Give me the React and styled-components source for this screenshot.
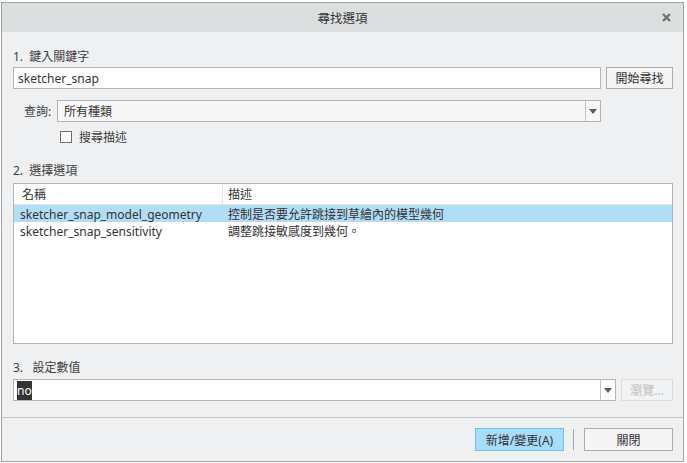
import React from "react";
import styled, { createGlobalStyle } from "styled-components";

const Global = createGlobalStyle`
  html, body { margin: 0; padding: 0; background: #ffffff; }
  body {
    font-family: "Noto Sans", "Noto Sans CJK TC", sans-serif;
    font-size: 12px;
    color: #404040;
  }
`;

const Dialog = styled.div`
  box-sizing: border-box;
  width: 683px;
  height: 460px;
  margin: 2px 0 0 1px;
  border: 1px solid #a3a3a3;
  background: #eff0f2;
  display: flex;
  flex-direction: column;
`;

const TitleBar = styled.div`
  height: 29px;
  background: #dcdfe0;
  display: flex;
  align-items: center;
  justify-content: center;
  position: relative;
  font-size: 12.5px;
  color: #333;
`;

const CloseBtn = styled.div`
  position: absolute;
  right: 12px;
  top: 10px;
  width: 9px;
  height: 9px;
  display: flex;
`;

const Body = styled.div`
  padding: 0 10px 0 11px;
  display: flex;
  flex-direction: column;
`;

const SectionLabel = styled.div`
  height: 16px;
  line-height: 16px;
  margin-top: ${(p) => p.$top}px;
  white-space: pre;
`;

const Row = styled.div`
  display: flex;
  align-items: center;
  gap: ${(p) => p.$gap || 0}px;
  margin-top: ${(p) => p.$top || 0}px;
  padding-left: ${(p) => p.$indent || 0}px;
  padding-right: ${(p) => p.$right || 0}px;
  height: ${(p) => p.$h || 22}px;
`;

const TextField = styled.div`
  box-sizing: border-box;
  flex: 1;
  height: 22px;
  background: #fff;
  border: 1px solid #b4b4b4;
  display: flex;
  align-items: center;
  padding-left: 4px;
  color: #333;
`;

const Button = styled.div`
  box-sizing: border-box;
  width: ${(p) => p.$w}px;
  height: ${(p) => p.$h || 22}px;
  display: flex;
  align-items: center;
  justify-content: center;
  background: ${(p) => (p.$primary ? "#a7dcfa" : p.$disabled ? "#f1f2f3" : "#f5f5f5")};
  border: 1px solid ${(p) => (p.$primary ? "#6ec2f0" : p.$disabled ? "#dcdcdc" : "#acacac")};
  color: ${(p) => (p.$disabled ? "#c0c0c0" : "#333")};
`;

const QueryLabel = styled.div`
  width: 33px;
`;

const Combo = styled.div`
  box-sizing: border-box;
  flex: 1;
  height: 22px;
  display: flex;
  background: ${(p) => (p.$white ? "#fff" : "#f7f7f7")};
  border: 1px solid #b4b4b4;
`;

const ComboText = styled.div`
  flex: 1;
  display: flex;
  align-items: center;
  padding-left: ${(p) => p.$pad}px;
  color: #333;
`;

const ComboArrow = styled.div`
  width: 14px;
  border-left: 1px solid #c4c4c4;
  display: flex;
  align-items: center;
  justify-content: center;
`;

const Arrow = () => (
  <svg width="8" height="5" viewBox="0 0 8 5">
    <path d="M0 0 H8 L4 5 Z" fill="#5a5a5a" />
  </svg>
);

const CheckBox = styled.div`
  box-sizing: border-box;
  width: 12px;
  height: 12px;
  border: 1px solid #6e6e6e;
  background: #fff;
`;

const List = styled.div`
  box-sizing: border-box;
  margin-top: 4px;
  height: 161px;
  background: #fff;
  border: 1px solid #b4b4b4;
`;

const ListRow = styled.div`
  display: grid;
  grid-template-columns: 208px 1fr;
  height: ${(p) => (p.$header ? 20 : 17)}px;
  align-items: center;
  background: ${(p) => (p.$selected ? "#b1ddf9" : "#fff")};
  border-bottom: ${(p) => (p.$header ? "1px solid #e3e3e3" : "none")};
  color: #333;
`;

const Cell = styled.div`
  height: 100%;
  display: flex;
  align-items: center;
  padding-left: ${(p) => p.$pad}px;
  border-left: ${(p) => (p.$divider ? "1px solid #e3e3e3" : "none")};
  white-space: nowrap;
`;

const Selected = styled.span`
  background: #333;
  color: #fff;
  padding: 1px 0;
  line-height: 17px;
`;

const Separator = styled.div`
  height: 1px;
  background: #c6c6c6;
  margin-top: 16px;
`;

const Footer = styled.div`
  display: flex;
  justify-content: flex-end;
  align-items: center;
  padding: 10px 10px 0 0;
  gap: 8px;
`;

const VLine = styled.div`
  width: 1px;
  height: 21px;
  background: #a8a8a8;
  margin: 0 2px 0 1px;
`;

export default function App() {
  return (
    <>
      <Global />
      <Dialog>
        <TitleBar>
          尋找選項
          <CloseBtn>
            <svg width="9" height="9" viewBox="0 0 9 9">
              <path d="M1 1 L8 8 M8 1 L1 8" stroke="#6f6f6f" strokeWidth="2.2" />
            </svg>
          </CloseBtn>
        </TitleBar>
        <Body>
          <SectionLabel $top={17}>{"1.  鍵入關鍵字"}</SectionLabel>
          <Row $top={2} $gap={5}>
            <TextField>sketcher_snap</TextField>
            <Button $w={67}>開始尋找</Button>
          </Row>
          <Row $top={11} $indent={11} $right={72}>
            <QueryLabel>查詢:</QueryLabel>
            <Combo>
              <ComboText $pad={6}>所有種類</ComboText>
              <ComboArrow>
                <Arrow />
              </ComboArrow>
            </Combo>
          </Row>
          <Row $top={8} $indent={47} $gap={7} $h={14}>
            <CheckBox />
            <span>搜尋描述</span>
          </Row>
          <SectionLabel $top={19}>{"2.  選擇選項"}</SectionLabel>
          <List>
            <ListRow $header>
              <Cell $pad={8}>名稱</Cell>
              <Cell $pad={5} $divider>描述</Cell>
            </ListRow>
            <ListRow $selected>
              <Cell $pad={6}>sketcher_snap_model_geometry</Cell>
              <Cell $pad={6}>控制是否要允許跳接到草繪內的模型幾何</Cell>
            </ListRow>
            <ListRow>
              <Cell $pad={6}>sketcher_snap_sensitivity</Cell>
              <Cell $pad={6}>調整跳接敏感度到幾何。</Cell>
            </ListRow>
          </List>
          <SectionLabel $top={16}>{"3.   設定數值"}</SectionLabel>
          <Row $top={3} $gap={5}>
            <Combo $white>
              <ComboText $pad={3}>
                <Selected>no</Selected>
              </ComboText>
              <ComboArrow>
                <Arrow />
              </ComboArrow>
            </Combo>
            <Button $w={52} $disabled>瀏覽...</Button>
          </Row>
        </Body>
        <Separator />
        <Footer>
          <Button $w={89} $h={23} $primary>新增/變更(A)</Button>
          <VLine />
          <Button $w={89} $h={23}>關閉</Button>
        </Footer>
      </Dialog>
    </>
  );
}
